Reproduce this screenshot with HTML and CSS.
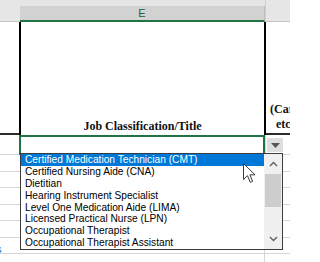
FILE: index.html
```html
<!DOCTYPE html>
<html>
<head>
<meta charset="utf-8">
<link rel="stylesheet" href="styles.css">
</head>
<body>
<div class="sheet">
  <div class="hdr">
    <div class="corner"></div>
    <div class="colhead"><div class="collabel">E</div></div>
    <div class="hrest"></div>
  </div>
  <div class="row1">
    <div class="d1"></div>
    <div class="e1"><span class="title">Job Classification/Title</span></div>
    <div class="f1"><div class="l1">(Career Level,</div><div class="l2">etc.)</div></div>
  </div>
  <div class="row2">
    <div class="d2"></div>
    <div class="e2"></div>
    <div class="f2"><div class="ddbtn"><svg width="9" height="5" viewBox="0 0 9 5"><path d="M0 0 H9 L4.5 5 Z" fill="#555"/></svg></div></div>
  </div>
  <div class="grid">
    <div class="gr h17"><div class="gd"></div><div class="ge"></div><div class="gf"></div></div>
    <div class="gr h16"><div class="gd"></div><div class="ge"></div><div class="gf"></div></div>
    <div class="gr h17"><div class="gd"></div><div class="ge"></div><div class="gf"></div></div>
    <div class="gr h16"><div class="gd"></div><div class="ge"></div><div class="gf"></div></div>
    <div class="gr h17"><div class="gd"></div><div class="ge"></div><div class="gf"></div></div>
    <div class="gr h16"><div class="gd"><span class="link">s</span></div><div class="ge"></div><div class="gf"></div></div>
    <div class="gr h17"><div class="gd"></div><div class="ge"></div><div class="gf"></div></div>
  </div>

  <div class="list">
    <div class="items">
      <div class="item sel">Certified Medication Technician (CMT)</div>
      <div class="item">Certified Nursing Aide (CNA)</div>
      <div class="item">Dietitian</div>
      <div class="item">Hearing Instrument Specialist</div>
      <div class="item">Level One Medication Aide (LIMA)</div>
      <div class="item">Licensed Practical Nurse (LPN)</div>
      <div class="item">Occupational Therapist</div>
      <div class="item">Occupational Therapist Assistant</div>
    </div>
    <div class="sbar">
      <div class="sbtn"><svg width="9" height="6" viewBox="0 0 9 6"><polyline points="1,5 4.5,1.5 8,5" fill="none" stroke="#606060" stroke-width="1.4"/></svg></div>
      <div class="thumb"></div>
      <div class="track"></div>
      <div class="sbtn"><svg width="9" height="6" viewBox="0 0 9 6"><polyline points="1,1 4.5,4.5 8,1" fill="none" stroke="#606060" stroke-width="1.4"/></svg></div>
    </div>
  </div>

  <svg class="cursor" width="13" height="21" viewBox="0 0 13 21"><path d="M0.5 0.5 V16.5 L4.5 12.7 L7.3 19.3 L9.6 18.3 L6.9 11.8 L12 11.8 Z" fill="#fff" stroke="#3a3a3a" stroke-width="1"/></svg>
</div>
</body>
</html>
```
FILE: styles.css
```css
html, body { margin: 0; padding: 0; background: #fff; }
.sheet { position: relative; width: 290px; height: 262px; overflow: hidden; background: #fff; }

.hdr { display: flex; height: 22px; background: #e6e6e6; }
.corner { width: 20px; flex: none; box-sizing: border-box; border-bottom: 1px solid #c4c4c4; }
.colhead { width: 245px; flex: none; padding-top: 6px; box-sizing: border-box; }
.collabel { height: 14px; background: #d2d2d2; border-bottom: 2px solid #217346; border-right: 1px solid #bdbdbd;
  font: 11px "Liberation Sans", Arial, sans-serif; color: #1d5e37; text-align: center; line-height: 14px; }
.hrest { flex: 1; min-width: 0; box-sizing: border-box; border-bottom: 1px solid #c4c4c4; border-left: 1px solid #d0d0d0; }

.row1 { display: flex; height: 113px; }
.d1 { width: 19px; flex: none; box-sizing: border-box; border-bottom: 2px solid #2a2a2a; }
.e1 { width: 247px; flex: none; box-sizing: border-box; border-left: 2px solid #000; border-right: 2px solid #000;
  display: flex; align-items: flex-end; justify-content: center; padding-bottom: 1px; }
.title { font: bold 12px "Liberation Serif", "Times New Roman", serif; color: #111; }
.f1 { flex: 1; min-width: 0; box-sizing: border-box; border-bottom: 2px solid #2a2a2a; display: flex; flex-direction: column;
  justify-content: flex-end; overflow: hidden; white-space: nowrap;
  font: bold 12px "Liberation Serif", "Times New Roman", serif; color: #111; line-height: 15px; padding-bottom: 1px; }
.l1 { padding-left: 4px; }
.l2 { padding-left: 10px; }

.row2 { display: flex; height: 20px; }
.d2 { width: 19px; flex: none; box-sizing: border-box; border-bottom: 1px solid #d6d6d6; }
.e2 { width: 246px; flex: none; box-sizing: border-box; border: 2px solid #217346; border-bottom: none; }
.f2 { flex: 1; min-width: 0; box-sizing: border-box; border-bottom: 1px solid #d6d6d6; border-left: 1px solid #d6d6d6; padding: 3px 0 0 1px; }
.ddbtn { width: 16px; height: 14px; background: #dedede; display: flex; align-items: center; justify-content: center; }

.grid { display: flex; flex-direction: column; }
.gr { display: flex; }
.h17 { height: 17px; }
.h16 { height: 16px; }
.gd { width: 19px; flex: none; box-sizing: border-box; border-bottom: 1px solid #d6d6d6; overflow: hidden; }
.ge { width: 246px; flex: none; box-sizing: border-box; border-bottom: 1px solid #d6d6d6; border-right: 1px solid #d6d6d6; }
.gf { flex: 1; min-width: 0; box-sizing: border-box; border-bottom: 1px solid #d6d6d6; }
.link { display: block; margin-left: -4px; margin-top: 6px; font: 11px "Liberation Sans", sans-serif; color: #1a5fc8; line-height: 10px; }

.list { position: absolute; left: 20px; top: 153px; width: 263px; height: 97px; box-sizing: border-box;
  border: 1px solid #3c3c3c; background: #fff; display: flex; }
.items { flex: 1; min-width: 0; display: flex; flex-direction: column; }
.item { height: 12px; line-height: 12px; padding-left: 4px; white-space: nowrap; overflow: hidden;
  font: 10.2px "Liberation Sans", Arial, sans-serif; color: #000; }
.item.sel { background: #0078d7; color: #fff; }
.sbar { width: 18px; flex: none; background: #f0f0f0; display: flex; flex-direction: column; }
.sbtn { height: 20px; display: flex; align-items: center; justify-content: center; }
.thumb { height: 33px; margin: 0 1px; background: #cdcdcd; }
.track { flex: 1; }

.cursor { position: absolute; left: 243px; top: 163px; }
```
